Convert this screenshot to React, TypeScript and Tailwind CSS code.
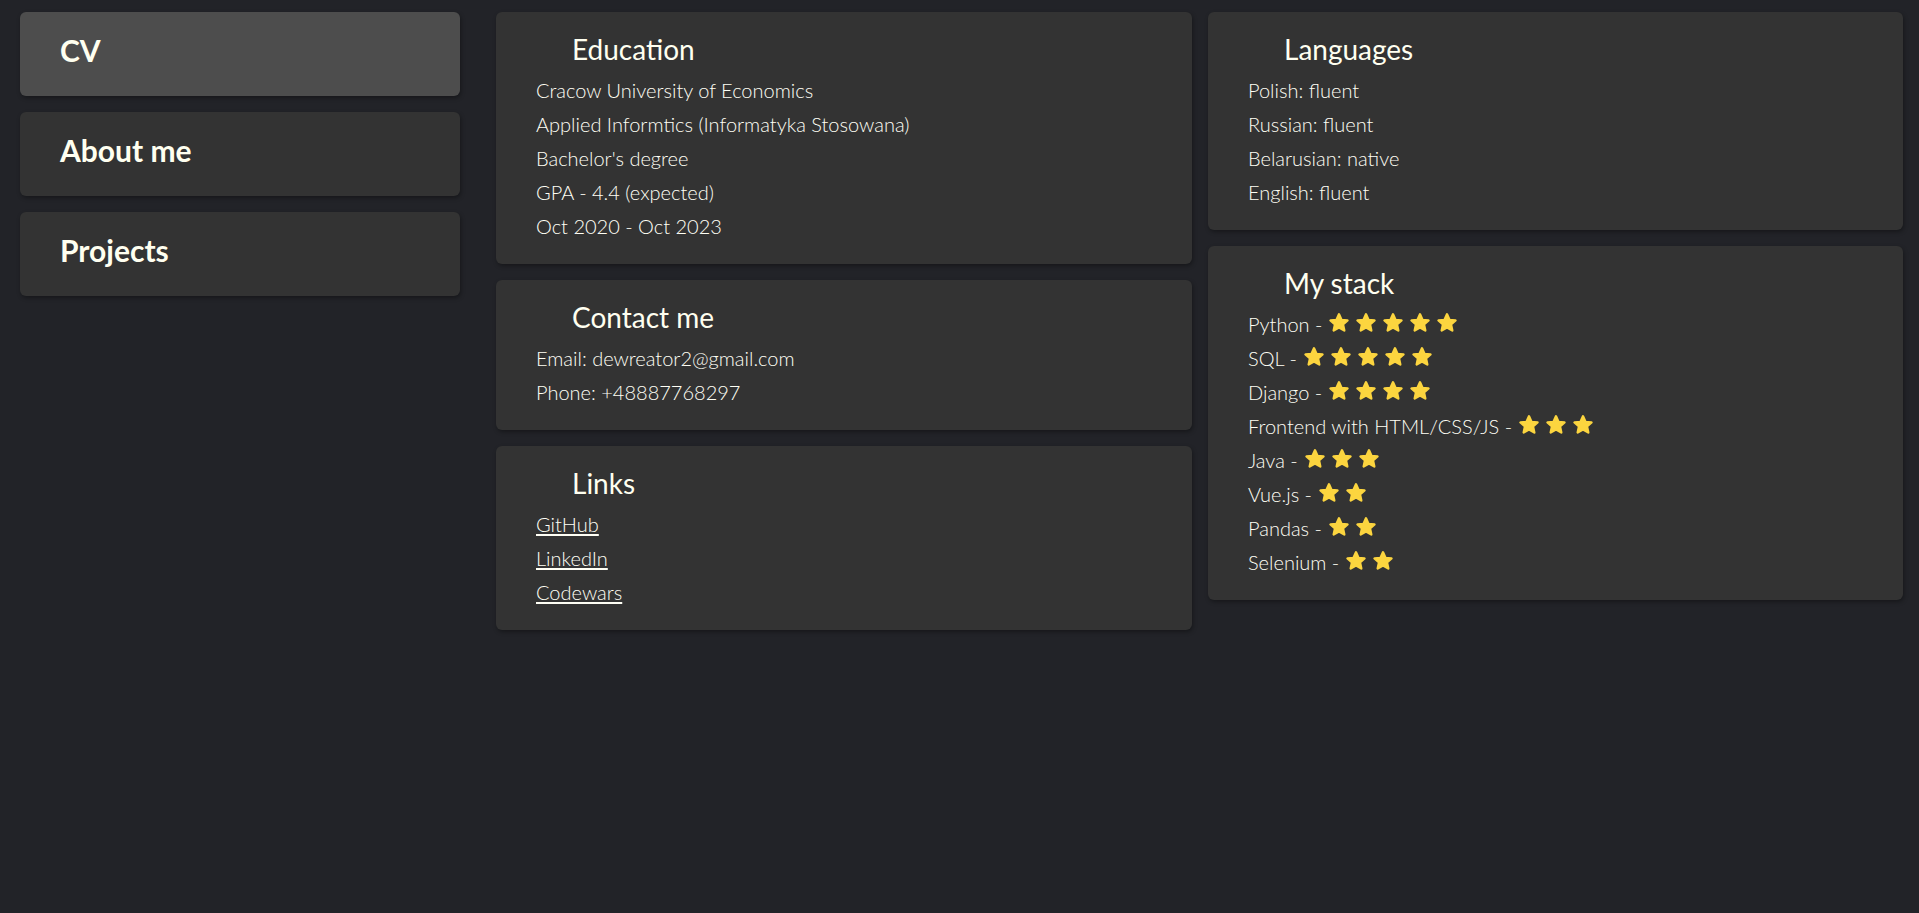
import React from 'react';

const nav = ['CV', 'About me', 'Projects'];

const education = [
  'Cracow University of Economics',
  'Applied Informtics (Informatyka Stosowana)',
  "Bachelor's degree",
  'GPA - 4.4 (expected)',
  'Oct 2020 - Oct 2023',
];

const languages = ['Polish: fluent', 'Russian: fluent', 'Belarusian: native', 'English: fluent'];

const stack: [string, number][] = [
  ['Python', 5],
  ['SQL', 5],
  ['Django', 4],
  ['Frontend with HTML/CSS/JS', 3],
  ['Java', 3],
  ['Vue.js', 2],
  ['Pandas', 2],
  ['Selenium', 2],
];

function Star() {
  return (
    <svg width="22" height="22" viewBox="0 0 24 24" className="shrink-0">
      <polygon
        points="12,2.5 14.8,8.6 21.3,9.2 16.4,13.6 17.8,20.2 12,16.8 6.2,20.2 7.6,13.6 2.7,9.2 9.2,8.6"
        fill="#fcd53f"
        stroke="#fcd53f"
        strokeWidth="2.6"
        strokeLinejoin="round"
      />
    </svg>
  );
}

function Card({ title, children }: { title: string; children: React.ReactNode }) {
  return (
    <section className="rounded-md bg-[#333333] px-[40px] pt-[19px] pb-[21px] shadow-[1px_2px_4px_rgba(0,0,0,0.35)]">
      <h2 className="pl-[36px] text-[28px] leading-[36px] font-normal text-[#fffff0]">{title}</h2>
      <div className="mt-[6px] text-[20px] leading-[34px] font-light text-[#fffff5]">{children}</div>
    </section>
  );
}

export default function App() {
  return (
    <div className="min-h-screen bg-[#222328] pt-[12px] pl-[20px] font-['Lato',sans-serif]">
      <div className="flex items-start">
        <nav className="flex w-[440px] flex-col gap-4">
          {nav.map((n, i) => (
            <div
              key={n}
              className={`h-[84px] rounded-md pl-[40px] pt-[20px] text-[30px] leading-[36px] font-bold text-[#fffff0] shadow-[1px_2px_4px_rgba(0,0,0,0.35)] ${
                i === 0 ? 'bg-[#4d4d4d]' : 'bg-[#333333]'
              }`}
            >
              {n}
            </div>
          ))}
        </nav>

        <div className="ml-[36px] flex w-[696px] flex-col gap-4">
          <Card title="Education">
            {education.map((t) => (
              <p key={t}>{t}</p>
            ))}
          </Card>
          <Card title="Contact me">
            <p>Email: dewreator2@gmail.com</p>
            <p>Phone: +48887768297</p>
          </Card>
          <Card title="Links">
            {['GitHub', 'LinkedIn', 'Codewars'].map((l) => (
              <p key={l}>
                <a href="#" className="underline underline-offset-2">
                  {l}
                </a>
              </p>
            ))}
          </Card>
        </div>

        <div className="ml-[16px] flex w-[695px] flex-col gap-4">
          <Card title="Languages">
            {languages.map((t) => (
              <p key={t}>{t}</p>
            ))}
          </Card>
          <Card title="My stack">
            {stack.map(([name, n]) => (
              <div key={name} className="flex h-[34px] items-center">
                <span>{name} -</span>
                <span className="ml-[6px] flex items-center gap-[5px] pb-[2px]">
                  {Array.from({ length: n }).map((_, k) => (
                    <Star key={k} />
                  ))}
                </span>
              </div>
            ))}
          </Card>
        </div>
      </div>
    </div>
  );
}
